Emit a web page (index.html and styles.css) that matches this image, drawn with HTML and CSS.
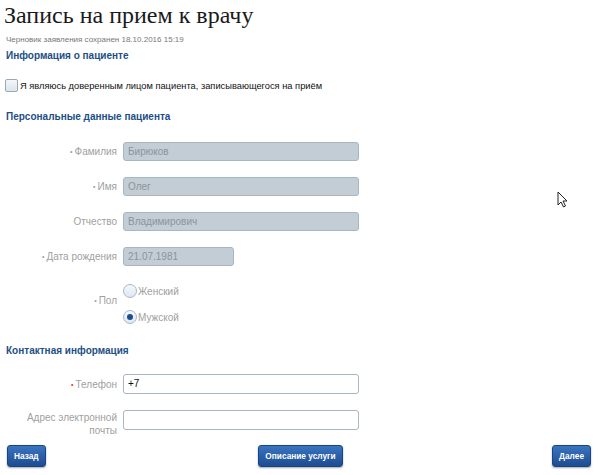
FILE: index.html
```html
<!DOCTYPE html>
<html lang="ru">
<head>
<meta charset="utf-8">
<title>Запись на прием к врачу</title>
<link rel="stylesheet" href="styles.css">
</head>
<body>
<div class="page">
  <h1 class="title">Запись на прием к врачу</h1>
  <div class="draft">Черновик заявления сохранен 18.10.2016 15:19</div>
  <h2 class="section section-first">Информация о пациенте</h2>
  <label class="check">
    <span class="checkbox"></span>
    <span class="check-text">Я являюсь доверенным лицом пациента, записывающегося на приём</span>
  </label>
  <h2 class="section section-personal">Персональные данные пациента</h2>
  <div class="form">
    <div class="row">
      <div class="label"><span class="req">•</span>Фамилия</div>
      <div class="field disabled wide">Бирюков</div>
    </div>
    <div class="row">
      <div class="label"><span class="req">•</span>Имя</div>
      <div class="field disabled wide">Олег</div>
    </div>
    <div class="row">
      <div class="label">Отчество</div>
      <div class="field disabled wide">Владимирович</div>
    </div>
    <div class="row">
      <div class="label"><span class="req">•</span>Дата рождения</div>
      <div class="field disabled short">21.07.1981</div>
    </div>
    <div class="row row-radio">
      <div class="label label-radio"><span class="req">•</span>Пол</div>
      <div class="radios">
        <div class="radio-item"><span class="radio"></span>Женский</div>
        <div class="radio-item"><span class="radio checked"></span>Мужской</div>
      </div>
    </div>
  </div>
  <h2 class="section section-contact">Контактная информация</h2>
  <div class="form">
    <div class="row">
      <div class="label"><span class="req red">•</span>Телефон</div>
      <div class="field active wide">+7</div>
    </div>
    <div class="row row-email">
      <div class="label label-two">Адрес электронной<br>почты</div>
      <div class="field active wide"></div>
    </div>
  </div>
  <div class="buttons">
    <button class="btn btn-back">Назад</button>
    <button class="btn btn-info">Описание услуги</button>
    <button class="btn btn-next">Далее</button>
  </div>
  <svg class="cursor" width="12" height="18" viewBox="0 0 12 18"><path d="M1 1 L1 14 L4 11 L6.5 16 L8.5 15 L6 10 L10 10 Z" fill="#fff" stroke="#222" stroke-width="1"/></svg>
</div>
</body>
</html>
```
FILE: styles.css
```css
html, body {
  margin: 0;
  padding: 0;
  background: #fff;
}
body {
  font-family: "Liberation Sans", Arial, sans-serif;
}
.page {
  position: relative;
  width: 600px;
  height: 475px;
  padding: 0 6px;
  box-sizing: border-box;
}
.title {
  margin: 0;
  padding-top: 0;
  font-family: "Liberation Serif", "Times New Roman", serif;
  font-weight: normal;
  font-size: 24px;
  line-height: 30px;
  color: #1a1a1a;
  margin-left: -2px;
}
.draft {
  margin-top: 5px;
  font-size: 8px;
  line-height: 10px;
  color: #777;
}
.section {
  margin: 0;
  font-size: 10px;
  line-height: 14px;
  font-weight: bold;
  color: #1d4f86;
}
.section-first {
  margin-top: 4px;
}
.check {
  display: flex;
  align-items: center;
  margin-top: 16px;
  height: 13px;
}
.checkbox {
  width: 11px;
  height: 11px;
  border: 1px solid #9aa9b8;
  border-radius: 2px;
  background: linear-gradient(#f4f7fa, #dde4ec);
  margin-right: 2px;
  margin-left: -1px;
}
.check-text {
  font-size: 9.3px;
  color: #111;
}
.section-personal {
  margin-top: 18px;
}
.form {
  display: flex;
  flex-direction: column;
  gap: 16px;
}
.section-personal + .form {
  margin-top: 18px;
}
.row {
  display: flex;
  align-items: center;
  gap: 6px;
}
.label {
  width: 111px;
  text-align: right;
  font-size: 10px;
  color: #a0a0a0;
}
.req {
  font-size: 7px;
  margin-right: 2px;
  vertical-align: 1px;
}
.req.red {
  color: #d33;
}
.field {
  height: 19px;
  box-sizing: border-box;
  border-radius: 3px;
  font-size: 10px;
  line-height: 17px;
  padding: 0 4px;
}
.wide {
  width: 236px;
}
.short {
  width: 111px;
}
.disabled {
  background: #c3cdd5;
  border: 1px solid #a8b6c1;
  color: #8a949c;
}
.active {
  background: #fff;
  border: 1px solid #a9b5c0;
  color: #111;
  height: 20px;
  line-height: 18px;
}
.row-radio {
  align-items: flex-start;
  margin-top: 2px;
}
.label-radio {
  margin-top: 11px;
}
.radios {
  display: flex;
  flex-direction: column;
  gap: 12px;
}
.radio-item {
  display: flex;
  align-items: center;
  font-size: 10px;
  color: #a0a0a0;
  height: 14px;
}
.radio {
  width: 12px;
  height: 12px;
  border: 1px solid #a7b8ca;
  border-radius: 50%;
  background: linear-gradient(#f5f8fb, #dfe7f0);
  position: relative;
  margin-right: 1px;
}
.radio.checked::after {
  content: "";
  position: absolute;
  left: 3px;
  top: 3px;
  width: 6px;
  height: 6px;
  border-radius: 50%;
  background: #1b4d8c;
}
.section-contact {
  margin-top: 20px;
}
.section-contact + .form {
  margin-top: 16px;
}
.row-email .label-two {
  line-height: 13px;
  margin-top: 1px;
}
.row-email {
  align-items: flex-start;
}
.buttons {
  display: grid;
  grid-template-columns: 1fr auto 1fr;
  align-items: center;
  margin-top: 8px;
  padding: 0 0 0 1px;
}
.btn-back {
  justify-self: start;
}
.btn-info {
  justify-self: center;
}
.btn-next {
  justify-self: end;
  margin-right: 3px;
}
.btn {
  height: 22px;
  border: 1px solid #174584;
  border-radius: 3px;
  background: linear-gradient(#3a74bf, #1c4c91);
  color: #fff;
  font-family: "Liberation Sans", Arial, sans-serif;
  font-weight: bold;
  font-size: 8.3px;
  padding: 0 6px;
  box-shadow: 0 1px 2px rgba(0,0,0,0.35);
}
.cursor {
  position: absolute;
  left: 557px;
  top: 191px;
}
```
